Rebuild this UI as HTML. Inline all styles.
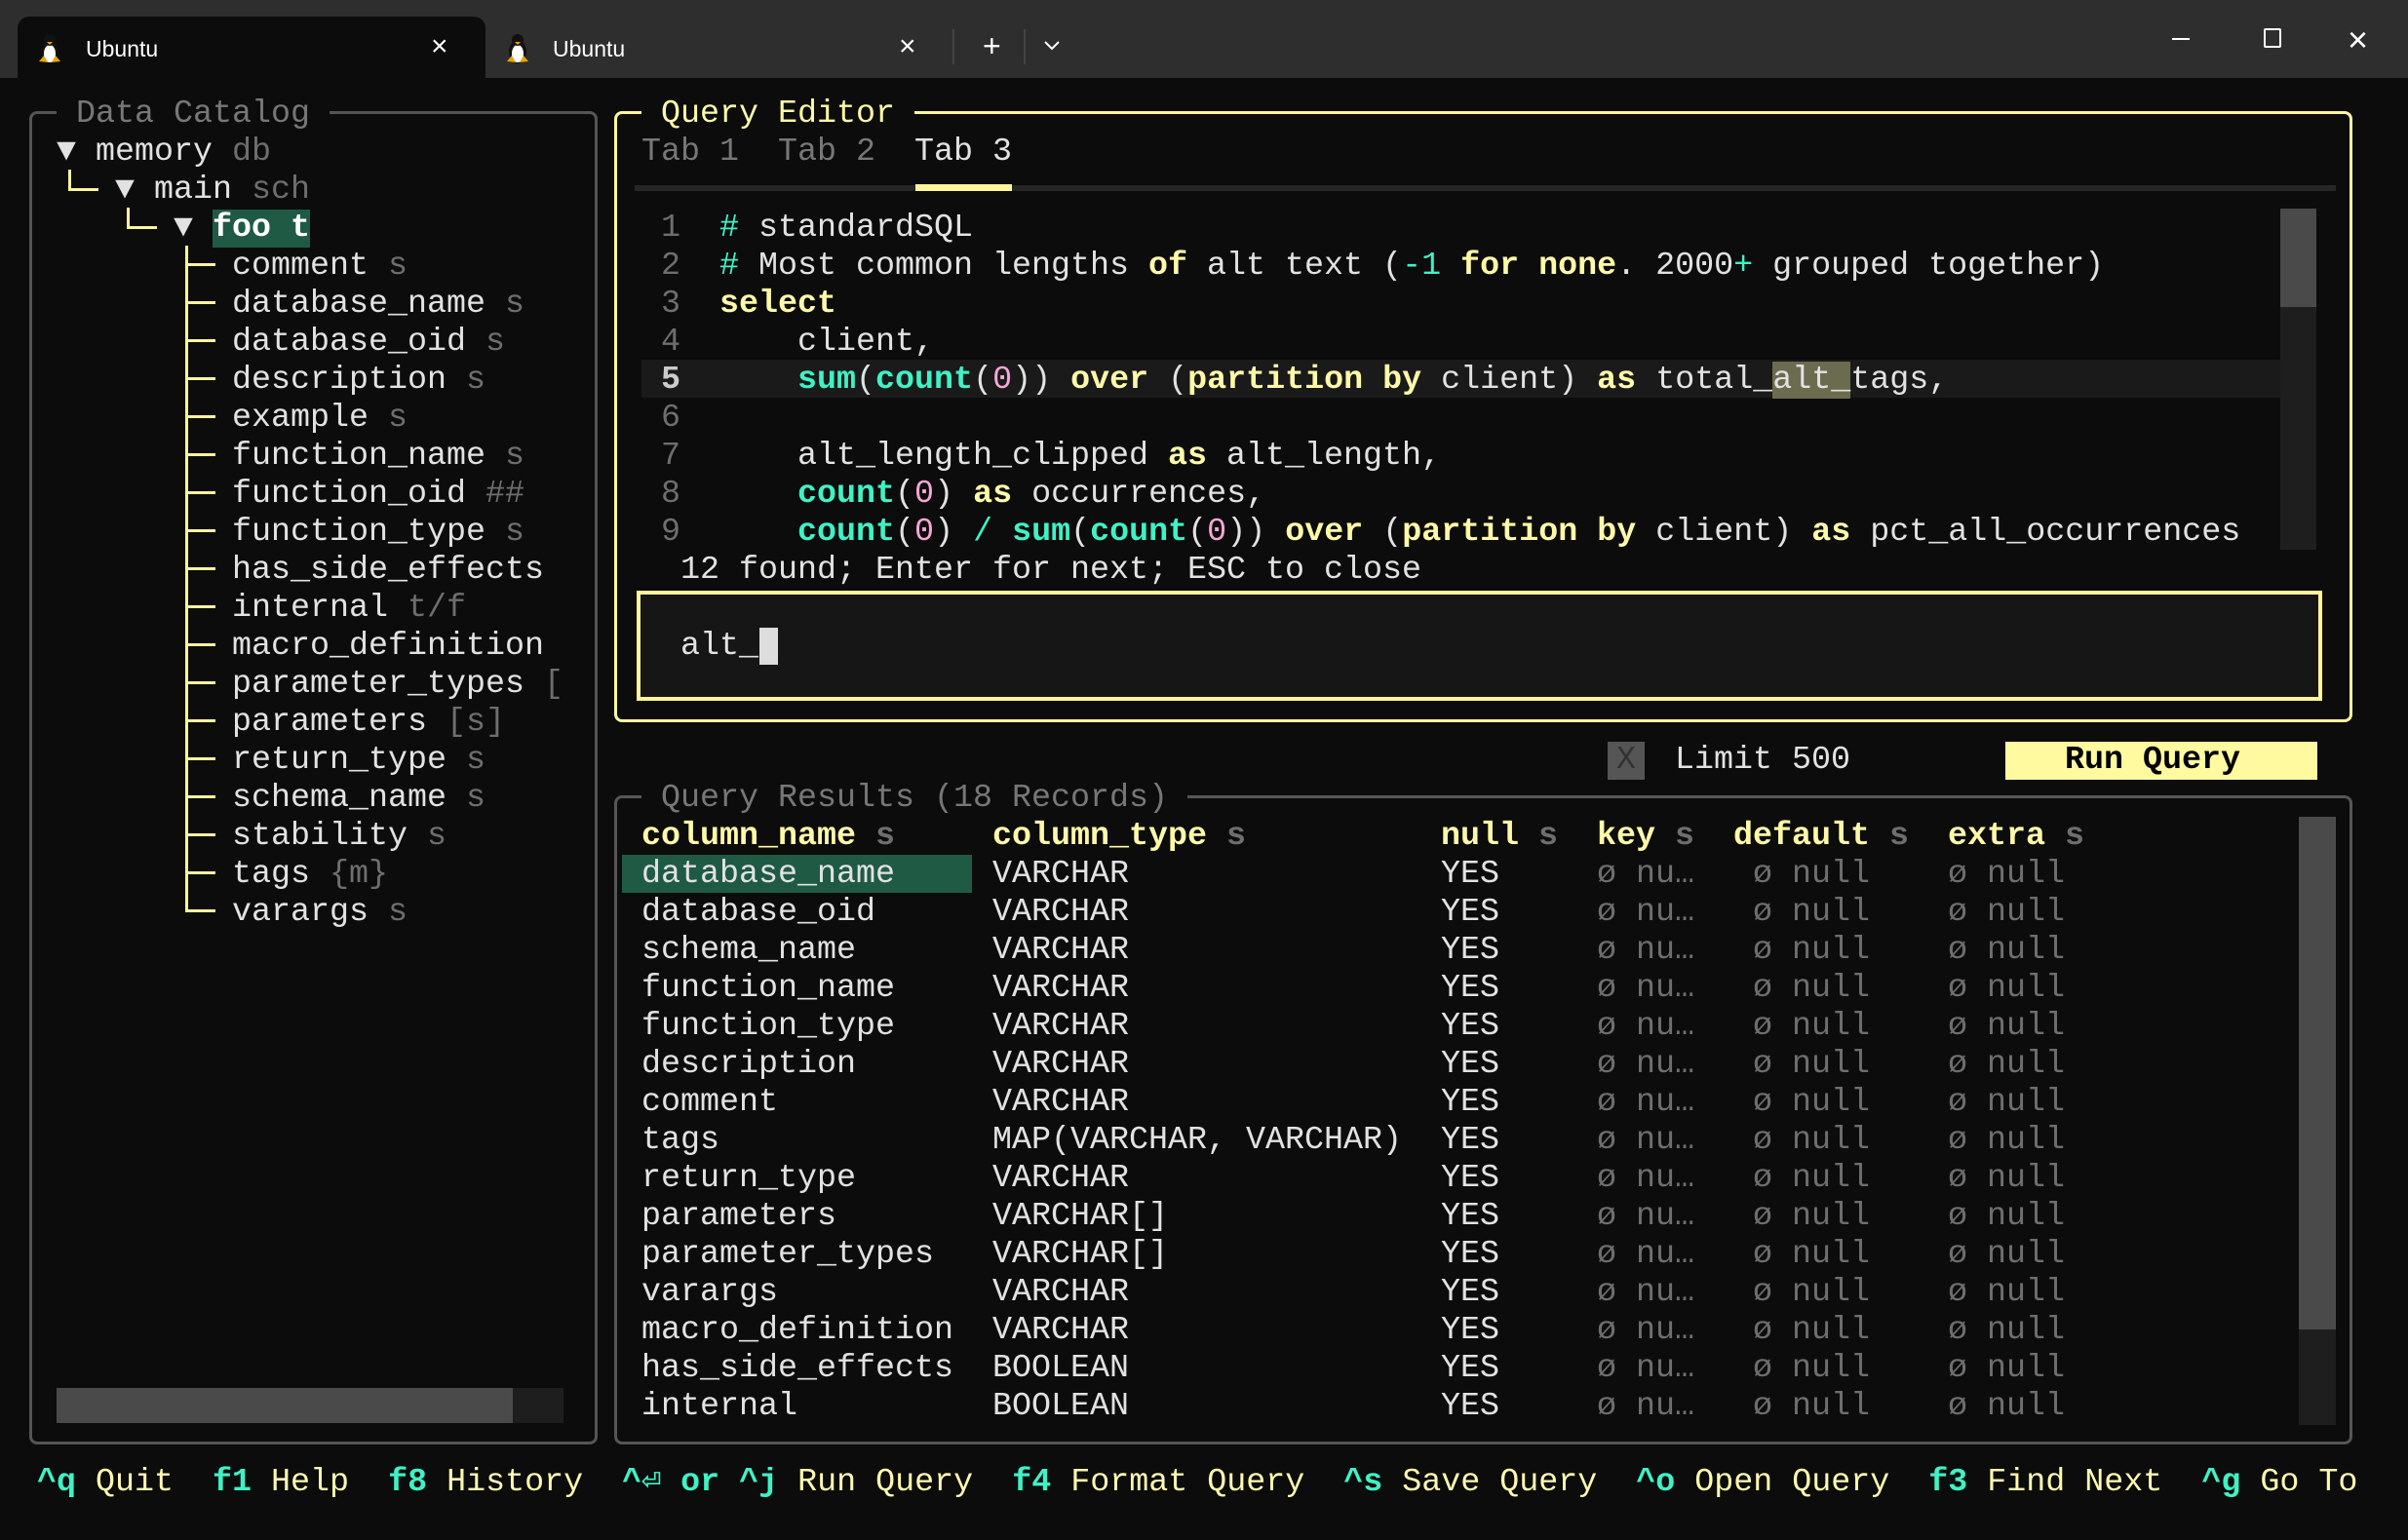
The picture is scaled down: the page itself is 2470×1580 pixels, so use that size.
<!DOCTYPE html>
<html><head><meta charset="utf-8"><style>
*{margin:0;padding:0;box-sizing:border-box}
html,body{width:2470px;height:1580px;overflow:hidden;background:#0c0c0c}
body{position:relative;font-family:"Liberation Mono","DejaVu Sans Mono",monospace;font-size:33.33px;color:#e2e2e2}
.r{position:absolute;white-space:pre;line-height:39px;height:39px;transform:translate(-3px,2px)}
.g{color:#6e6e6e}.y{color:#fff9a8}.yb{color:#fff9a8;font-weight:bold}.c{color:#3ff2c6;font-weight:bold}.cn{color:#3ff2c6}.p{color:#f7a6d8}.w{color:#e2e2e2}.d{color:#777}
.box{position:absolute;border:3px solid #555;border-radius:8px}
.tl{position:absolute;background:#fff59d}
.t{position:absolute;font-family:"Liberation Sans","DejaVu Sans",sans-serif;color:#fff;font-size:23px}
</style></head><body>
<div style="position:absolute;left:0;top:0;width:2470px;height:80px;background:#2e2e2e"></div>
<div style="position:absolute;left:18px;top:17px;width:480px;height:64px;background:#0c0c0c;border-radius:12px 12px 0 0"></div>
<svg style="position:absolute;left:38px;top:33px" width="26" height="34" viewBox="0 0 26 34"><ellipse cx="13" cy="20" rx="9" ry="12" fill="#111"/><ellipse cx="13" cy="22" rx="6" ry="9" fill="#fff"/><circle cx="13" cy="8" r="6" fill="#111"/><path d="M10 10 L13 13 L16 10Z" fill="#e8a300"/><path d="M2 30 L7 24 L11 31Z M24 30 L19 24 L15 31Z" fill="#e8a300"/></svg>
<div class="t" style="left:88px;top:37px">Ubuntu</div>
<div class="t" style="left:442px;top:31px;font-size:30px">×</div>
<svg style="position:absolute;left:518px;top:33px" width="26" height="34" viewBox="0 0 26 34"><ellipse cx="13" cy="20" rx="9" ry="12" fill="#111"/><ellipse cx="13" cy="22" rx="6" ry="9" fill="#fff"/><circle cx="13" cy="8" r="6" fill="#111"/><path d="M10 10 L13 13 L16 10Z" fill="#e8a300"/><path d="M2 30 L7 24 L11 31Z M24 30 L19 24 L15 31Z" fill="#e8a300"/></svg>
<div class="t" style="left:567px;top:37px">Ubuntu</div>
<div class="t" style="left:922px;top:31px;font-size:30px">×</div>
<div style="position:absolute;left:977px;top:30px;width:2px;height:36px;background:#444"></div>
<div class="t" style="left:1008px;top:29px;font-size:32px">+</div>
<div style="position:absolute;left:1050px;top:30px;width:2px;height:36px;background:#444"></div>
<svg style="position:absolute;left:1071px;top:42px" width="16" height="10"><path d="M1 1 L8 8 L15 1" stroke="#fff" stroke-width="2" fill="none"/></svg>
<div style="position:absolute;left:2228px;top:39px;width:18px;height:2px;background:#fff"></div>
<div style="position:absolute;left:2322px;top:29px;width:18px;height:20px;border:2px solid #fff;border-radius:2px"></div>
<div class="t" style="left:2408px;top:20px;font-size:36px">×</div>

<div class="box" style="left:30px;top:114px;width:583px;height:1368px"></div>
<div class="r d" style="left:61px;top:96px;background:#0c0c0c"> Data Catalog </div>
<div class="r" style="left:61px;top:135px">▼ memory <span class="g">db</span></div>
<div class="r" style="left:121px;top:174px">▼ main <span class="g">sch</span></div>
<div class="r" style="left:181px;top:213px">▼ </div>
<div class="r" style="left:221px;top:213px;background:#1f5a45;font-weight:bold;color:#fff">foo t</div>
<div class="tl" style="left:70px;top:174px;width:3px;height:22px"></div>
<div class="tl" style="left:70px;top:193px;width:31px;height:3px"></div>
<div class="tl" style="left:130px;top:213px;width:3px;height:22px"></div>
<div class="tl" style="left:130px;top:232px;width:31px;height:3px"></div>
<div class="tl" style="left:190px;top:252px;width:3px;height:683px"></div>
<div style="position:absolute;left:58px;top:1424px;width:468px;height:36px;background:#4a4a4a"></div>
<div style="position:absolute;left:526px;top:1424px;width:52px;height:36px;background:#1e1e1e"></div>

<div class="box" style="left:630px;top:114px;width:1783px;height:627px;border-color:#fff59d"></div>
<div class="r y" style="left:661px;top:96px;background:#0c0c0c"> Query Editor </div>
<div class="r d" style="left:661px;top:135px">Tab 1</div>
<div class="r d" style="left:801px;top:135px">Tab 2</div>
<div class="r w" style="left:941px;top:135px">Tab 3</div>
<div style="position:absolute;left:651px;top:190px;width:1745px;height:6px;background:#262626"></div>
<div style="position:absolute;left:939px;top:189px;width:99px;height:7px;background:#fff59d"></div>
<div style="position:absolute;left:658px;top:369px;width:1681px;height:39px;background:#1a1a1a"></div>
<div style="position:absolute;left:2339px;top:214px;width:37px;height:101px;background:#4a4a4a"></div>
<div style="position:absolute;left:2339px;top:315px;width:37px;height:249px;background:#1e1e1e"></div>
<div class="r g" style="left:681px;top:213px">1</div>
<div class="r g" style="left:681px;top:252px">2</div>
<div class="r g" style="left:681px;top:291px">3</div>
<div class="r g" style="left:681px;top:330px">4</div>
<div class="r" style="left:681px;top:369px;font-weight:bold;color:#ccc">5</div>
<div class="r g" style="left:681px;top:408px">6</div>
<div class="r g" style="left:681px;top:447px">7</div>
<div class="r g" style="left:681px;top:486px">8</div>
<div class="r g" style="left:681px;top:525px">9</div>
<div class="r" style="left:741px;top:213px"><span class="cn">#</span> standardSQL</div>
<div class="r" style="left:741px;top:252px"><span class="cn">#</span> Most common lengths <span class="yb">of</span> alt text (<span class="cn">-1</span> <span class="yb">for</span> <span class="yb">none</span>. 2000<span class="cn">+</span> grouped together)</div>
<div class="r yb" style="left:741px;top:291px">select</div>
<div class="r" style="left:741px;top:330px">    client,</div>
<div class="r" style="left:741px;top:369px">    <span class="c">sum</span>(<span class="c">count</span>(<span class="p">0</span>)) <span class="yb">over</span> (<span class="yb">partition by</span> client) <span class="yb">as</span> total_<span style="background:#6b6b4f">alt_</span>tags,</div>
<div class="r" style="left:741px;top:447px">    alt_length_clipped <span class="yb">as</span> alt_length,</div>
<div class="r" style="left:741px;top:486px">    <span class="c">count</span>(<span class="p">0</span>) <span class="yb">as</span> occurrences,</div>
<div class="r" style="left:741px;top:525px">    <span class="c">count</span>(<span class="p">0</span>) <span class="cn">/</span> <span class="c">sum</span>(<span class="c">count</span>(<span class="p">0</span>)) <span class="yb">over</span> (<span class="yb">partition by</span> client) <span class="yb">as</span> pct_all_occurrences</div>
<div class="r" style="left:701px;top:564px">12 found; Enter for next; ESC to close</div>
<div style="position:absolute;left:653px;top:606px;width:1729px;height:113px;border:4px solid #fff59d;background:#161616"></div>
<div class="r" style="left:701px;top:642px">alt_</div>
<div style="position:absolute;left:779px;top:644px;width:19px;height:38px;background:#ddd"></div>

<div class="r" style="left:1652px;top:759px;width:38px;background:#555;color:#333;text-align:center">X</div>
<div class="r" style="left:1721px;top:759px">Limit 500</div>
<div class="r" style="left:2060px;top:759px;width:320px;background:#fffaa0;color:#000;font-weight:bold;padding-left:61px">Run Query</div>

<div class="box" style="left:630px;top:816px;width:1783px;height:666px"></div>
<div class="r d" style="left:661px;top:798px;background:#0c0c0c"> Query Results (18 Records) </div>
<div style="position:absolute;left:2358px;top:838px;width:38px;height:526px;background:#4a4a4a"></div>
<div style="position:absolute;left:2358px;top:1364px;width:38px;height:98px;background:#1e1e1e"></div>
<div style="position:absolute;left:638px;top:877px;width:359px;height:39px;background:#1f5a45"></div>
<div class="r" style="left:661px;top:837px"><span class="yb">column_name</span> <span class="g" style="font-weight:bold">s</span></div>
<div class="r" style="left:1021px;top:837px"><span class="yb">column_type</span> <span class="g" style="font-weight:bold">s</span></div>
<div class="r" style="left:1481px;top:837px"><span class="yb">null</span> <span class="g" style="font-weight:bold">s</span></div>
<div class="r" style="left:1641px;top:837px"><span class="yb">key</span> <span class="g" style="font-weight:bold">s</span></div>
<div class="r" style="left:1781px;top:837px"><span class="yb">default</span> <span class="g" style="font-weight:bold">s</span></div>
<div class="r" style="left:2001px;top:837px"><span class="yb">extra</span> <span class="g" style="font-weight:bold">s</span></div>

<div class="r" style="left:41px;top:1500px;color:#fff9b0"><span class="c">^q</span> Quit  <span class="c">f1</span> Help  <span class="c">f8</span> History  <span class="c">^⏎ or ^j</span> Run Query  <span class="c">f4</span> Format Query  <span class="c">^s</span> Save Query  <span class="c">^o</span> Open Query  <span class="c">f3</span> Find Next  <span class="c">^g</span> Go To</div>

<div class="r" style="left:241px;top:252px">comment <span class="g">s</span></div>
<div class="r" style="left:241px;top:291px">database_name <span class="g">s</span></div>
<div class="r" style="left:241px;top:330px">database_oid <span class="g">s</span></div>
<div class="r" style="left:241px;top:369px">description <span class="g">s</span></div>
<div class="r" style="left:241px;top:408px">example <span class="g">s</span></div>
<div class="r" style="left:241px;top:447px">function_name <span class="g">s</span></div>
<div class="r" style="left:241px;top:486px">function_oid <span class="g">##</span></div>
<div class="r" style="left:241px;top:525px">function_type <span class="g">s</span></div>
<div class="r" style="left:241px;top:564px">has_side_effects</div>
<div class="r" style="left:241px;top:603px">internal <span class="g">t/f</span></div>
<div class="r" style="left:241px;top:642px">macro_definition</div>
<div class="r" style="left:241px;top:681px">parameter_types <span class="g">[</span></div>
<div class="r" style="left:241px;top:720px">parameters <span class="g">[s]</span></div>
<div class="r" style="left:241px;top:759px">return_type <span class="g">s</span></div>
<div class="r" style="left:241px;top:798px">schema_name <span class="g">s</span></div>
<div class="r" style="left:241px;top:837px">stability <span class="g">s</span></div>
<div class="r" style="left:241px;top:876px">tags <span class="g">{m}</span></div>
<div class="r" style="left:241px;top:915px">varargs <span class="g">s</span></div>
<div class="tl" style="left:190px;top:270px;width:31px;height:3px"></div>
<div class="tl" style="left:190px;top:309px;width:31px;height:3px"></div>
<div class="tl" style="left:190px;top:348px;width:31px;height:3px"></div>
<div class="tl" style="left:190px;top:387px;width:31px;height:3px"></div>
<div class="tl" style="left:190px;top:426px;width:31px;height:3px"></div>
<div class="tl" style="left:190px;top:465px;width:31px;height:3px"></div>
<div class="tl" style="left:190px;top:504px;width:31px;height:3px"></div>
<div class="tl" style="left:190px;top:543px;width:31px;height:3px"></div>
<div class="tl" style="left:190px;top:582px;width:31px;height:3px"></div>
<div class="tl" style="left:190px;top:621px;width:31px;height:3px"></div>
<div class="tl" style="left:190px;top:660px;width:31px;height:3px"></div>
<div class="tl" style="left:190px;top:699px;width:31px;height:3px"></div>
<div class="tl" style="left:190px;top:738px;width:31px;height:3px"></div>
<div class="tl" style="left:190px;top:777px;width:31px;height:3px"></div>
<div class="tl" style="left:190px;top:816px;width:31px;height:3px"></div>
<div class="tl" style="left:190px;top:855px;width:31px;height:3px"></div>
<div class="tl" style="left:190px;top:894px;width:31px;height:3px"></div>
<div class="tl" style="left:190px;top:933px;width:31px;height:3px"></div>

<div class="r" style="left:661px;top:876px">database_name
database_oid
schema_name
function_name
function_type
description
comment
tags
return_type
parameters
parameter_types
varargs
macro_definition
has_side_effects
internal</div>
<div class="r" style="left:1021px;top:876px">VARCHAR
VARCHAR
VARCHAR
VARCHAR
VARCHAR
VARCHAR
VARCHAR
MAP(VARCHAR, VARCHAR)
VARCHAR
VARCHAR[]
VARCHAR[]
VARCHAR
VARCHAR
BOOLEAN
BOOLEAN</div>
<div class="r" style="left:1481px;top:876px">YES
YES
YES
YES
YES
YES
YES
YES
YES
YES
YES
YES
YES
YES
YES</div>
<div class="r g" style="left:1641px;top:876px">ø nu…
ø nu…
ø nu…
ø nu…
ø nu…
ø nu…
ø nu…
ø nu…
ø nu…
ø nu…
ø nu…
ø nu…
ø nu…
ø nu…
ø nu…</div>
<div class="r g" style="left:1801px;top:876px">ø null
ø null
ø null
ø null
ø null
ø null
ø null
ø null
ø null
ø null
ø null
ø null
ø null
ø null
ø null</div>
<div class="r g" style="left:2001px;top:876px">ø null
ø null
ø null
ø null
ø null
ø null
ø null
ø null
ø null
ø null
ø null
ø null
ø null
ø null
ø null</div>
</body></html>
